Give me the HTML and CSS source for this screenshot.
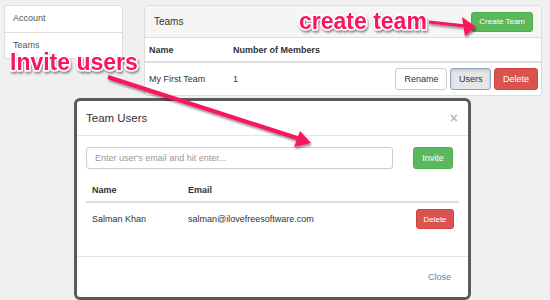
FILE: index.html
```html
<!DOCTYPE html>
<html lang="en">
<head>
  <meta charset="UTF-8" />
  <title>Teams</title>
  <link rel="stylesheet" href="styles.css">
</head>
<body>

  <div class="page">
    <aside class="side">
      <div class="side-item">Account</div>
      <div class="side-item">Teams</div>
    </aside>

    <section class="panel">
      <div class="panel-head">
        <span>Teams</span>
        <button class="btn btn-green btn-sm">Create Team</button>
      </div>
      <table class="grid">
        <tr>
          <th class="col-name">Name</th>
          <th>Number of Members</th>
          <th></th>
        </tr>
        <tr>
          <td>My First Team</td>
          <td>1</td>
          <td class="actions">
            <button class="btn btn-white">Rename</button>
            <button class="btn btn-pressed">Users</button>
            <button class="btn btn-red">Delete</button>
          </td>
        </tr>
      </table>
    </section>
  </div>

  <!-- Team Users Modal -->
  <div class="modal">
    <div class="modal-head">
      <span class="modal-title">Team Users</span>
      <span class="modal-x">&times;</span>
    </div>
    <div class="modal-body">
      <div class="invite-row">
        <input type="text" placeholder="Enter user's email and hit enter...">
        <button class="btn btn-green">Invite</button>
      </div>
      <table class="grid users">
        <tr>
          <th class="col-user">Name</th>
          <th>Email</th>
          <th></th>
        </tr>
        <tr>
          <td>Salman Khan</td>
          <td>salman@ilovefreesoftware.com</td>
          <td class="actions"><button class="btn btn-red btn-sm">Delete</button></td>
        </tr>
      </table>
    </div>
    <div class="modal-foot">
      <span class="link">Close</span>
    </div>
  </div>

  <!-- annotations drawn over the screenshot -->
  <svg class="notes" width="550" height="300" viewBox="0 0 550 300">
    <defs>
      <filter id="shade" x="-10%" y="-30%" width="130%" height="170%">
        <feDropShadow dx="1" dy="2" stdDeviation="1.2" flood-color="#000" flood-opacity="0.45"/>
      </filter>
    </defs>
    <g filter="url(#shade)">
      <line x1="429" y1="22" x2="466" y2="26" class="arrow-line" stroke-width="3"/>
      <polygon points="462,17 476,27 465,36" class="arrow-head"/>
      <line x1="108" y1="77" x2="300" y2="139" class="arrow-line" stroke-width="4"/>
      <polygon points="300,131 311,143 294,147" class="arrow-head"/>
      <text x="299" y="29" class="note">create team</text>
      <text x="10" y="70" class="note">Invite users</text>
    </g>
  </svg>

</body>
</html>
```

FILE: styles.css
```css
* { box-sizing: border-box; }

body {
  margin: 0;
  background-color: #f0f0f0;
  font-family: "Liberation Sans", Arial, sans-serif;
  font-size: 9px;
  color: #333;
  width: 550px;
  height: 300px;
  position: relative;
  overflow: hidden;
}

.page {
  display: flex;
  align-items: flex-start;
  gap: 21px;
  padding: 5px 8px 0 4px;
}

.side {
  width: 119px;
  background: white;
  border: 1px solid #ddd;
  border-radius: 3px;
}

.side-item {
  height: 26px;
  line-height: 25px;
  padding: 0 8px;
  color: #555;
}

.side-item + .side-item {
  border-top: 1px solid #ddd;
}

.panel {
  flex: 1;
  background: white;
  border: 1px solid #ddd;
  border-radius: 3px;
}

.panel-head {
  height: 32px;
  display: flex;
  align-items: center;
  justify-content: space-between;
  padding: 0 8px 0 9px;
  background-color: #f5f5f5;
  border-bottom: 1px solid #ddd;
  font-size: 10px;
}

.grid {
  width: 100%;
  border-collapse: collapse;
}

.grid th {
  text-align: left;
  height: 24px;
  padding: 0 4px;
  border-bottom: 2px solid #ddd;
  font-weight: bold;
}

.grid td {
  height: 33px;
  padding: 0 4px;
}

.grid .col-name { width: 84px; }

.grid .actions {
  text-align: right;
  padding-right: 3px;
}

.btn {
  font-family: inherit;
  font-size: 9px;
  height: 22px;
  padding: 0 8px;
  border: 1px solid #ccc;
  border-radius: 3px;
  color: #333;
  background: white;
  vertical-align: middle;
}

.btn-sm {
  font-size: 8px;
  height: 20px;
  padding: 0 7px;
}

.btn-green {
  background-color: #5cb85c;
  border-color: #4cae4c;
  color: white;
}

.btn-red {
  background-color: #d9534f;
  border-color: #d43f3a;
  color: white;
}

.btn-pressed {
  background-color: #e6e6e6;
  border-color: #8da6c6;
  box-shadow: inset 0 2px 3px rgba(0,0,0,0.12);
}

.modal {
  position: absolute;
  left: 74px;
  top: 98px;
  width: 397px;
  height: 202px;
  border: 3px solid #5a5a5a;
  border-radius: 6px;
  background: white;
  display: flex;
  flex-direction: column;
}

.modal-head {
  height: 35px;
  display: flex;
  align-items: center;
  justify-content: space-between;
  padding: 0 10px 0 9px;
  border-bottom: 1px solid #e5e5e5;
}

.modal-title { font-size: 11.5px; }

.modal-x {
  font-size: 14px;
  font-weight: bold;
  color: #bbb;
}

.modal-body {
  flex: 1;
  padding: 11px 9px 0;
}

.invite-row {
  display: flex;
  gap: 20px;
}

.invite-row input {
  width: 307px;
  height: 22px;
  padding: 0 8px;
  border: 1px solid #ccc;
  border-radius: 3px;
  font-family: inherit;
  font-size: 9px;
}

.invite-row input::placeholder { color: #999; }

.invite-row .btn {
  width: 40px;
  padding: 0;
}

.users { margin-top: 9px; }

.users th {
  height: 24px;
  padding: 0 6px;
}

.users td { padding: 0 6px; }

.users .col-user { width: 96px; }

.users .actions { padding-right: 5px; }

.users .btn-sm {
  width: 38px;
  padding: 0;
}

.modal-foot {
  height: 41px;
  display: flex;
  align-items: center;
  justify-content: flex-end;
  padding-right: 17px;
  border-top: 1px solid #e5e5e5;
}

.link { color: #5487c4; }

.notes {
  position: absolute;
  top: 0;
  left: 0;
  pointer-events: none;
}

.arrow-line { stroke: #f8145c; }

.arrow-head { fill: #f8145c; }

.note {
  font-family: "Liberation Sans", Arial, sans-serif;
  font-weight: bold;
  font-size: 23px;
  fill: #f8145c;
  stroke: white;
  stroke-width: 3px;
  stroke-linejoin: round;
  paint-order: stroke;
}
```
